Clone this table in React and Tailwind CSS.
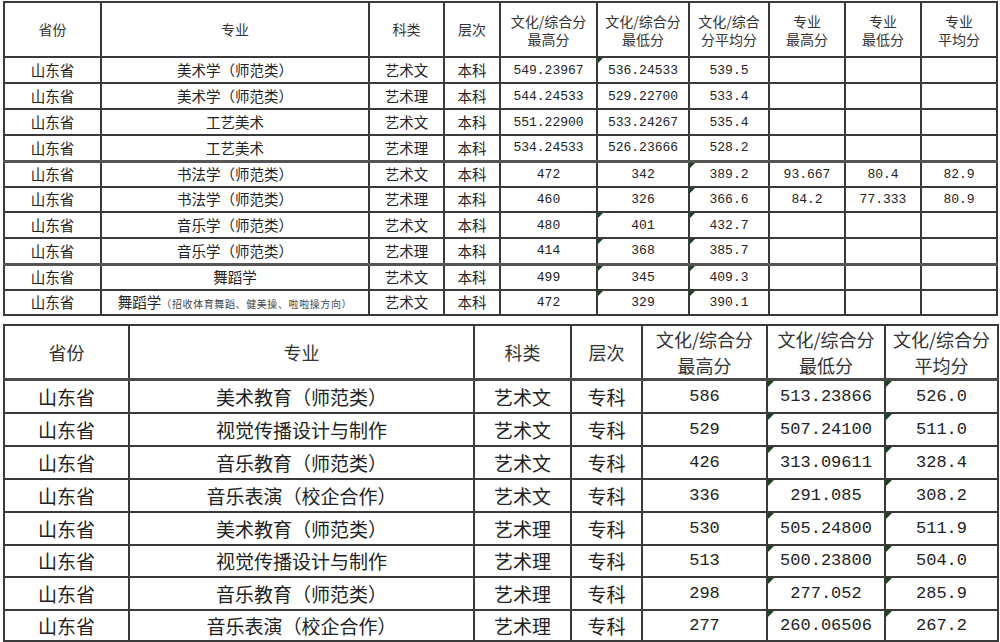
const CJK = "font-['Noto_Sans_CJK_SC',sans-serif]";
const NUM = "font-['Liberation_Mono','Noto_Sans_CJK_SC',monospace]";

const TOP_COLS = [97, 268, 75, 56, 97, 92, 80, 76, 76, 76];
const TOP_HEAD = ['省份', '专业', '科类', '层次', ['文化/综合分', '最高分'], ['文化/综合分', '最低分'], ['文化/综合', '分平均分'], ['专业', '最高分'], ['专业', '最低分'], ['专业', '平均分']];

const TOP_ROWS = [
  { c: ['山东省', '美术学（师范类）', '艺术文', '本科', '549.23967', '536.24533', '539.5', '', '', ''], m: [5], h: 26 },
  { c: ['山东省', '美术学（师范类）', '艺术理', '本科', '544.24533', '529.22700', '533.4', '', '', ''], m: [], h: 26 },
  { c: ['山东省', '工艺美术', '艺术文', '本科', '551.22900', '533.24267', '535.4', '', '', ''], m: [], h: 26 },
  { c: ['山东省', '工艺美术', '艺术理', '本科', '534.24533', '526.23666', '528.2', '', '', ''], m: [], h: 26, thick: true },
  { c: ['山东省', '书法学（师范类）', '艺术文', '本科', '472', '342', '389.2', '93.667', '80.4', '82.9'], m: [6], h: 26 },
  { c: ['山东省', '书法学（师范类）', '艺术理', '本科', '460', '326', '366.6', '84.2', '77.333', '80.9'], m: [6], h: 25 },
  { c: ['山东省', '音乐学（师范类）', '艺术文', '本科', '480', '401', '432.7', '', '', ''], m: [5, 6], h: 26 },
  { c: ['山东省', '音乐学（师范类）', '艺术理', '本科', '414', '368', '385.7', '', '', ''], m: [5, 6], h: 26, thick: true },
  { c: ['山东省', '舞蹈学', '艺术文', '本科', '499', '345', '409.3', '', '', ''], m: [5, 6], h: 26 },
  { c: ['山东省', 'dance', '艺术文', '本科', '472', '329', '390.1', '', '', ''], m: [5, 6], h: 25 },
];

const BOT_COLS = [125, 345, 97, 71, 125, 118, 113];
const BOT_HEAD = ['省份', '专业', '科类', '层次', ['文化/综合分', '最高分'], ['文化/综合分', '最低分'], ['文化/综合分', '平均分']];

const BOT_ROWS = [
  ['山东省', '美术教育（师范类）', '艺术文', '专科', '586', '513.23866', '526.0'],
  ['山东省', '视觉传播设计与制作', '艺术文', '专科', '529', '507.24100', '511.0'],
  ['山东省', '音乐教育（师范类）', '艺术文', '专科', '426', '313.09611', '328.4'],
  ['山东省', '音乐表演（校企合作）', '艺术文', '专科', '336', '291.085', '308.2'],
  ['山东省', '美术教育（师范类）', '艺术理', '专科', '530', '505.24800', '511.9'],
  ['山东省', '视觉传播设计与制作', '艺术理', '专科', '513', '500.23800', '504.0'],
  ['山东省', '音乐教育（师范类）', '艺术理', '专科', '298', '277.052', '285.9'],
  ['山东省', '音乐表演（校企合作）', '艺术理', '专科', '277', '260.06506', '267.2'],
];
const BOT_H = [33, 33, 33, 33, 33, 32, 33, 32];

function Mark({ big }) {
  return (
    <span
      className={
        big
          ? 'absolute left-0 top-0 h-0 w-0 border-t-[6px] border-r-[6px] border-t-[#1d3f22] border-r-transparent'
          : 'absolute left-0 top-0 h-0 w-0 border-t-[5px] border-r-[5px] border-t-[#1d3f22] border-r-transparent'
      }
    />
  );
}

function Head({ v, leading }) {
  if (Array.isArray(v)) {
    return (
      <div className="flex flex-col items-center">
        <span className={`block ${leading}`}>{v[0]}</span>
        <span className={`block ${leading}`}>{v[1]}</span>
      </div>
    );
  }
  return v;
}

function TopTable() {
  return (
    <table className="table-fixed border-collapse text-[#222]" style={{ width: 994 }}>
      <colgroup>
        {TOP_COLS.map((w, i) => <col key={i} style={{ width: w }} />)}
      </colgroup>
      <thead>
        <tr className="h-[55px]">
          {TOP_HEAD.map((h, i) => (
            <th key={i} className={`border-2 border-[#3a3a3a] p-0 text-center align-middle text-[14px] font-normal text-[#333] ${CJK}`}>
              <Head v={h} leading="leading-[18px]" />
            </th>
          ))}
        </tr>
      </thead>
      <tbody>
        {TOP_ROWS.map((r, ri) => (
          <tr key={ri} style={{ height: r.h }}>
            {r.c.map((v, ci) => (
              <td
                key={ci}
                className={`relative border-x-2 border-t-2 border-[#3a3a3a] p-0 text-center align-middle leading-none ${r.thick ? 'border-b-[3px] border-b-[#555]' : 'border-b-2'} ${ci >= 4 ? `text-[13px] ${NUM}` : `text-[14.5px] ${CJK}`}`}
              >
                {r.m.includes(ci) && <Mark />}
                {v === 'dance' ? (
                  <span className="whitespace-nowrap">
                    舞蹈学<span className="text-[10px] tracking-[0.6px] text-[#444]">（招收体育舞蹈、健美操、啦啦操方向）</span>
                  </span>
                ) : (
                  v
                )}
              </td>
            ))}
          </tr>
        ))}
      </tbody>
    </table>
  );
}

function BottomTable() {
  return (
    <table className="table-fixed border-collapse text-[#222]" style={{ width: 994 }}>
      <colgroup>
        {BOT_COLS.map((w, i) => <col key={i} style={{ width: w }} />)}
      </colgroup>
      <thead>
        <tr className="h-[54px]">
          {BOT_HEAD.map((h, i) => (
            <th key={i} className={`border-2 border-b-[3px] border-[#3a3a3a] border-b-[#4a4a4a] p-0 text-center align-middle text-[18px] font-normal text-[#333] ${CJK}`}>
              <Head v={h} leading="leading-[26px]" />
            </th>
          ))}
        </tr>
      </thead>
      <tbody>
        {BOT_ROWS.map((r, ri) => (
          <tr key={ri} style={{ height: BOT_H[ri] }}>
            {r.map((v, ci) => (
              <td
                key={ci}
                className={`relative border-2 border-[#3a3a3a] p-0 text-center align-middle leading-none ${ri === BOT_ROWS.length - 1 ? 'border-b-[3px]' : ''} ${ci >= 4 ? `text-[17px] ${NUM}` : `text-[19px] ${CJK}`}`}
              >
                {ci >= 5 && <Mark big />}
                {v}
              </td>
            ))}
          </tr>
        ))}
      </tbody>
    </table>
  );
}

export default function App() {
  return (
    <div className="h-[642px] w-[1000px] overflow-hidden bg-white pl-[3px] pt-[1px]">
      <TopTable />
      <div className="h-[8px]" />
      <BottomTable />
    </div>
  );
}
